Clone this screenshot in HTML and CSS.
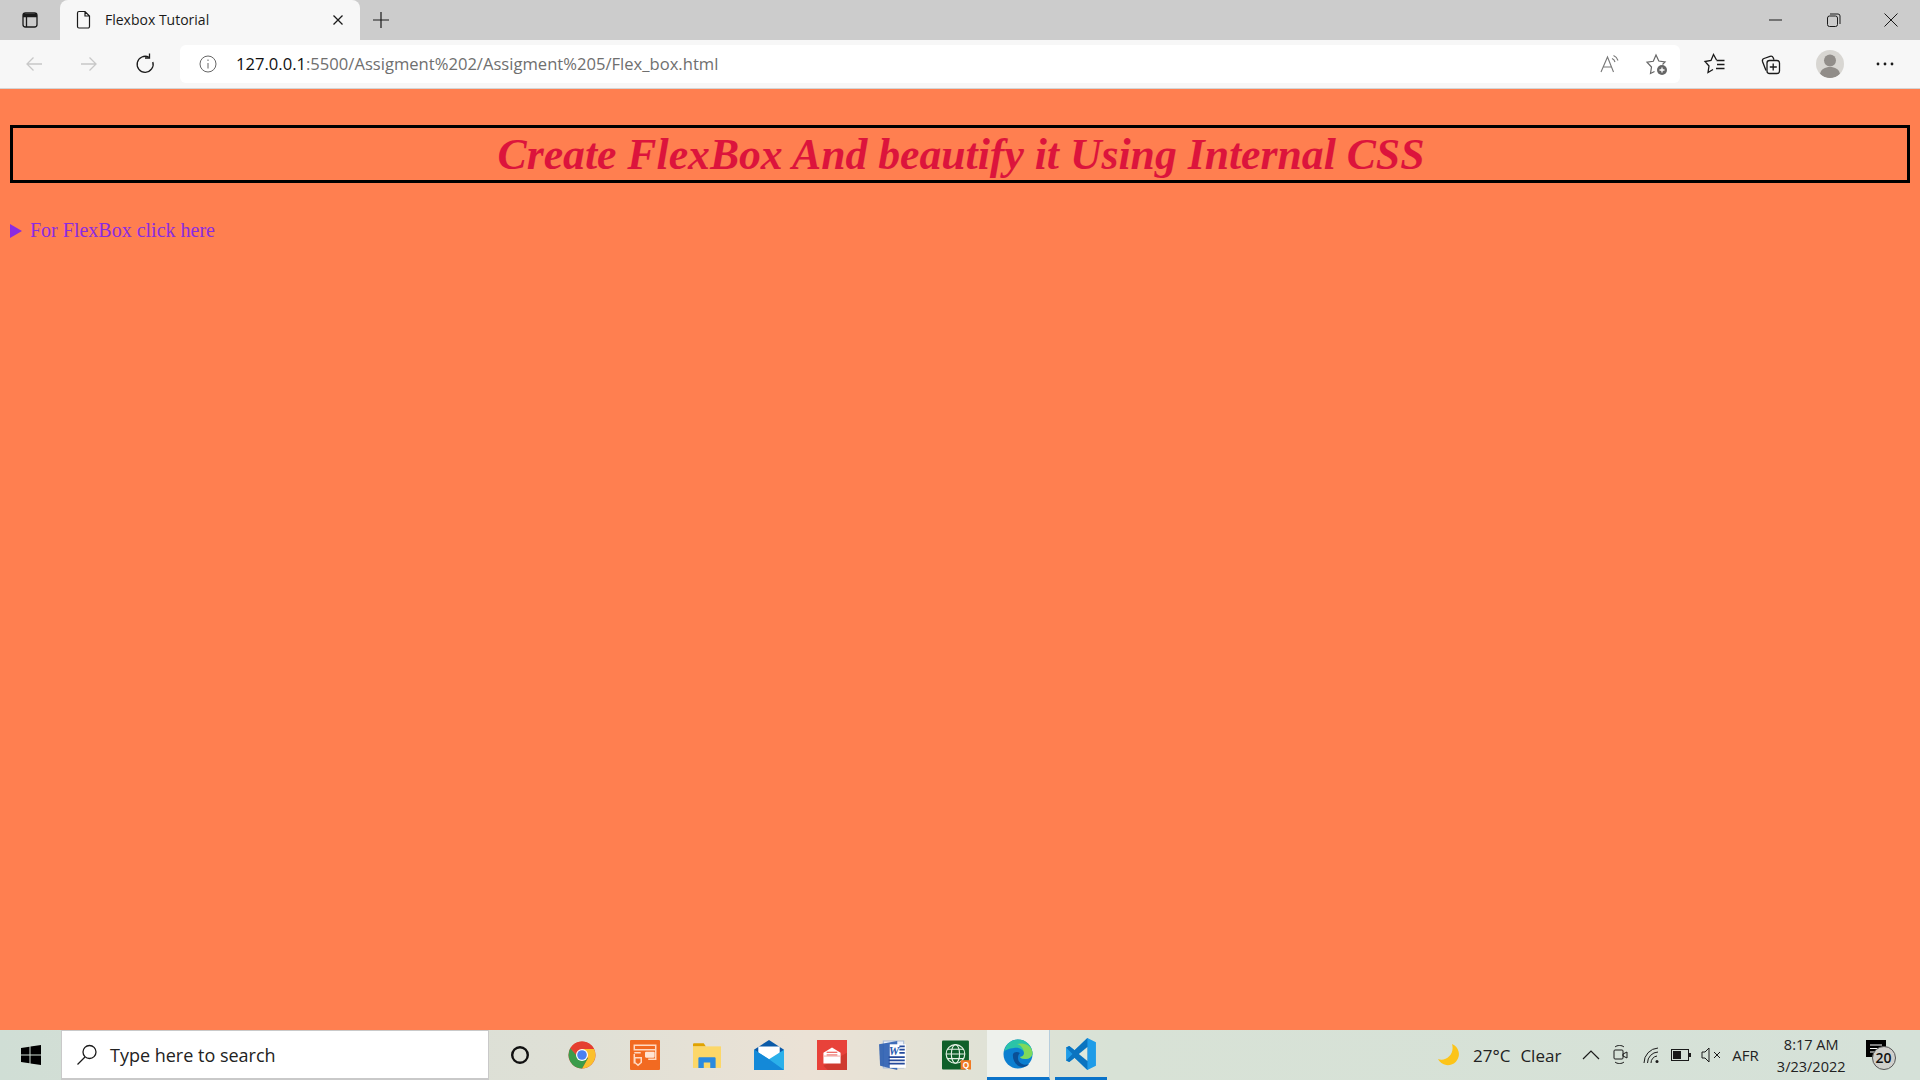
FILE: index.html
```html
<!DOCTYPE html>
<html lang="en">

<head>
    <meta charset="UTF-8">
    <title>Flexbox Tutorial</title>
    <link rel="stylesheet" href="styles.css">
</head>

<body>
    <div class="tabstrip">
        <button class="tab-actions">
            <svg width="20" height="20" viewBox="0 0 20 20" fill="none" stroke="#1a1a1a" stroke-width="1.3"><rect x="3" y="3" width="14" height="14" rx="2.5"/><path d="M3 5.500h14" stroke-width="3.500"/><path d="M6.500 7v10"/></svg>
        </button>
        <div class="tab">
            <svg width="20" height="20" viewBox="0 0 20 20" fill="none" stroke="#1a1a1a" stroke-width="1.2"><path d="M5 1.500h6l4.500 4.500v10.500a1.500 1.500 0 0 1-1.500 1.500H5a1.500 1.500 0 0 1-1.500-1.500V3A1.500 1.500 0 0 1 5 1.500zM11 1.500V6h4.500"/></svg>
            <span class="tab-title">Flexbox Tutorial</span>
            <svg class="tab-close" width="12" height="12" viewBox="0 0 12 12" stroke="#1a1a1a" stroke-width="1.300"><path d="M1.500 1.500l9 9M10.500 1.500l-9 9"/></svg>
        </div>
        <button class="new-tab">
            <svg width="18" height="18" viewBox="0 0 18 18" stroke="#1a1a1a" stroke-width="1.200"><path d="M9 1v16M1 9h16"/></svg>
        </button>
        <div class="window-controls">
            <svg width="14" height="14" viewBox="0 0 14 14" stroke="#1a1a1a" stroke-width="1"><path d="M0 7h13"/></svg>
            <svg width="14" height="14" viewBox="0 0 14 14" fill="none" stroke="#1a1a1a" stroke-width="1"><rect x="0.500" y="3" width="10" height="10.500" rx="2"/><path d="M3 1h8a2 2 0 0 1 2 2v8"/></svg>
            <svg width="14" height="14" viewBox="0 0 14 14" stroke="#1a1a1a" stroke-width="1"><path d="M0.500 0.500l13 13M13.500 0.500l-13 13"/></svg>
        </div>
    </div>

    <div class="toolbar">
        <div class="nav-buttons">
            <svg width="20" height="20" viewBox="0 0 20 20" fill="none" stroke="#c8c8c8" stroke-width="1.300"><path d="M18 10H3M9.500 3.500L3 10l6.500 6.500"/></svg>
            <svg width="20" height="20" viewBox="0 0 20 20" fill="none" stroke="#c8c8c8" stroke-width="1.300"><path d="M2 10h15M10.500 3.500L17 10l-6.500 6.500"/></svg>
            <svg width="22" height="22" viewBox="0 0 22 22" fill="none" stroke="#1a1a1a" stroke-width="1.300"><path d="M15 4.300A8 8 0 1 0 18.800 9"/><path d="M15.500 0.500v4.500H11"/></svg>
        </div>
        <div class="addressbar">
            <svg width="20" height="20" viewBox="0 0 20 20" fill="none" stroke="#666" stroke-width="1"><circle cx="10" cy="10" r="8"/><path d="M10 9v5.500M10 5.500v1.500"/></svg>
            <span class="url"><span class="host">127.0.0.1</span>:5500/Assigment%202/Assigment%205/Flex_box.html</span>
            <div class="address-icons">
                <svg width="22" height="22" viewBox="0 0 22 22" fill="none" stroke="#777" stroke-width="1.100"><path d="M2 19L8.500 4l6 15M4.500 14h8"/><path d="M13 5.500a5 5 0 0 1 3 3.500M14.500 2.500a8 8 0 0 1 4.500 5"/></svg>
                <svg width="24" height="24" viewBox="0 0 24 24" fill="none" stroke="#666" stroke-width="1.200"><path d="M9.500 19.500L5.500 21.500L6.500 15L2 10.200L8.300 9.300L11 3L13.800 9L20 10L17.500 12.500"/><circle cx="17" cy="18" r="5" fill="#666" stroke="none"/><path d="M17 15.500v5M14.500 18h5" stroke="#fff" stroke-width="1.300"/></svg>
            </div>
        </div>
        <div class="toolbar-icons">
            <svg width="24" height="24" viewBox="0 0 24 24" fill="none" stroke="#1a1a1a" stroke-width="1.300"><path d="M13.500 8L10.500 2.500L8 8.500L2 9.500L6 14L5 20.500L10 17.500"/><path d="M13.500 8.500h8M14 12.500h7.500M13 16.500h8.500"/></svg>
            <svg width="24" height="24" viewBox="0 0 24 24" fill="none" stroke="#1a1a1a" stroke-width="1.300"><path d="M7 18.500L3.500 9.500a2.500 2.500 0 0 1 1.500-3l6-2.200a2.500 2.500 0 0 1 3.200 1.400l.8 2"/><rect x="8" y="8.500" width="12.500" height="13" rx="2.500"/><path d="M14.200 11.500v7M10.800 15h7"/></svg>
            <div class="avatar">
                <svg width="28" height="28" viewBox="0 0 28 28" fill="#918d89"><circle cx="14" cy="10.500" r="6"/><path d="M4 24c1-5 5-7 10-7s9 2 10 7a14 14 0 0 1-20 0z"/></svg>
            </div>
            <svg width="18" height="6" viewBox="0 0 18 6" fill="#1a1a1a"><circle cx="2" cy="3" r="1.400"/><circle cx="9" cy="3" r="1.400"/><circle cx="16" cy="3" r="1.400"/></svg>
        </div>
    </div>

    <main class="page">
        <h1 class="page-title">Create FlexBox And beautify it Using Internal CSS</h1>
        <details class="flex-details">
            <summary>For FlexBox click here</summary>
        </details>
    </main>

    <footer class="taskbar">
        <div class="start">
            <svg width="20" height="20" viewBox="0 0 20 20" fill="#000"><path d="M0 3l8.500-1.200V9.500H0zM9.500 1.600L20 0v9.500H9.500zM0 10.500h8.500v7.700L0 17zM9.500 10.500H20V20L9.500 18.400z"/></svg>
        </div>
        <div class="search">
            <svg width="22" height="22" viewBox="0 0 22 22" fill="none" stroke="#1a1a1a" stroke-width="1.300"><circle cx="13.500" cy="8" r="6.500"/><path d="M9 13L1.500 20.500"/></svg>
            <span>Type here to search</span>
        </div>
        <div class="task-apps">
            <div class="task-app">
                <svg width="20" height="20" viewBox="0 0 20 20" fill="none" stroke="#111" stroke-width="2.400"><circle cx="10" cy="10" r="7.800"/></svg>
            </div>
            <div class="task-app">
                <svg width="28" height="28" viewBox="0 0 28 28"><circle cx="14" cy="14" r="13.500" fill="#dd4b39"/><path d="M14 14L2.300 7.300A13.500 13.500 0 0 1 14 .5h0A13.500 13.500 0 0 1 26 8H14z" fill="#e53e30"/><path d="M14 8h12a13.500 13.500 0 0 1-12 19.500L20 17z" fill="#fbc02d"/><path d="M2.300 7.300A13.500 13.500 0 0 0 14 27.500L20 17h-6a6 6 0 0 1-6-3z" fill="#3b9c4b"/><circle cx="14" cy="14" r="6" fill="#fff"/><circle cx="14" cy="14" r="4.800" fill="#4a80f0"/></svg>
            </div>
            <div class="task-app">
                <svg width="30" height="30" viewBox="0 0 28 28"><rect width="28" height="28" rx="1" fill="#f26a21"/><g fill="none" stroke="#ffd9c2" stroke-width="1.400"><path d="M4 5h20v4H4zM4 12h6M4 22v-9M24 9v9h-7"/><path d="M4.500 16.500h6v4.500l-3 2.500-3-2.500z"/></g><rect x="14" y="11" width="9" height="5.500" rx="1" fill="#ffe3d3"/></svg>
            </div>
            <div class="task-app">
                <svg width="28" height="26" viewBox="0 0 26 24"><path d="M0 2a1 1 0 0 1 1-1h9l2 3h-12z" fill="#e0a200"/><rect y="4" width="26" height="20" fill="#fcd768"/><path d="M5 24v-9a1 1 0 0 1 1-1h14a1 1 0 0 1 1 1v9h-5v-5h-6v5z" fill="#2a8ae0"/></svg>
            </div>
            <div class="task-app">
                <svg width="30" height="30" viewBox="0 0 28 28"><path d="M0 9L14 0l14 9v19H0z" fill="#0a5aa8"/><path d="M4 6h20v10l-10 5-10-5z" fill="#fff"/><path d="M0 9l14 9 14-9v19H0z" fill="#2bb0ea"/><path d="M0 28V9l14 9 14 10z" fill="#1489d8"/></svg>
            </div>
            <div class="task-app">
                <svg width="30" height="30" viewBox="0 0 28 28"><rect width="28" height="28" fill="#e8423a"/><path d="M28 12v16H10L6 24z" fill="#cf3a2f"/><path d="M6 12l8-5 8 5v10H6z" fill="#fff"/><path d="M9 11.500h10M9 14h10" stroke="#e8423a" stroke-width="1"/><path d="M6 15h16" stroke="#f4b0aa" stroke-width="1"/></svg>
            </div>
            <div class="task-app">
                <svg width="29" height="30" viewBox="0 0 27 28"><path d="M4 1h19v25H4z" fill="#eef2fa" stroke="#a9bcd8"/><path d="M0 4l17-3v27L1 24z" fill="#2a5db0" opacity="0.900"/><path d="M10 4h15v22H10z" fill="#fff"/><text class="word-mark" x="9" y="14">W</text><path d="M19 6h5M19 9h5M19 12h5M9 16h15M9 19h15M9 22h15" stroke="#24499a" stroke-width="1.600"/></svg>
            </div>
            <div class="task-app">
                <svg width="29" height="30" viewBox="0 0 28 28"><rect width="26" height="28" rx="1" fill="#0f5f2a"/><g fill="none" stroke="#e6f1e6" stroke-width="1.100"><circle cx="13" cy="13" r="9"/><ellipse cx="13" cy="13" rx="4" ry="9"/><path d="M4 13h18M5 8.500h16M5 17.500h16"/></g><rect x="18" y="19" width="10" height="9" fill="#f07a24"/><text class="q-mark" x="20" y="27">Q</text></svg>
            </div>
            <div class="task-app active edge">
                <svg width="30" height="30" viewBox="0 0 30 30"><circle cx="15" cy="15" r="14.500" fill="#0c7fd0"/><path d="M1 13C3 4 9 .5 15 .5c8 0 14 6 14.500 13.500 0 4-3 6-7 6-3 0-5-1-5.500-2 3-.5 4-2 4-4 0-3-5-6-10-5-5 .5-9 2-10 4z" fill="#2bc4a8"/><path d="M29.500 14c0 3-3 6-7 6-3 0-5-1-5.500-2 3-.5 4-2 4-4 0-4-3-8-7-9 8-2 15 2 15.500 9z" fill="#7fd95b"/><path d="M10 15c-1 6 3 13 10 13 2 0 5-1 6-3-4 2-11 0-11-6 0-3 1-4 2-5-3-2-6-1-7 1z" fill="#0a4f96"/></svg>
            </div>
            <div class="task-app active code">
                <svg width="30" height="32" viewBox="0 0 28 30"><path d="M20 0l8 4v22l-8 4L8 18.500 3 22.500 0 21V9l3-1.500 5 4z" fill="#1f9ce8"/><path d="M20 0v30L8 18.500 3 22.500 0 21l6-6-6-6 3-1.500 5 4z" fill="#0b74c0"/><path d="M20 8.500L12 15l8 6.500z" fill="#dfe8dc"/></svg>
            </div>
        </div>
        <div class="tray">
            <svg class="moon" width="24" height="24" viewBox="0 0 24 24"><path d="M15 1a11 11 0 1 1-14 15c8 3 17-5 14-15z" fill="#fcc419"/></svg>
            <span class="weather">27°C</span>
            <span class="weather">Clear</span>
            <svg class="chevron" width="18" height="10" viewBox="0 0 18 10" fill="none" stroke="#1a1a1a" stroke-width="1.200"><path d="M1 9l8-8 8 8"/></svg>
            <svg class="camera" width="16" height="22" viewBox="0 0 16 22" fill="none" stroke="#1a1a1a" stroke-width="1"><rect x="1" y="6" width="9" height="9" rx="1"/><path d="M10 10l4-2v6l-4-2zM2 3c2-2 7-2 9 0M2 18c2 2 7 2 9 0"/></svg>
            <svg class="wifi" width="18" height="18" viewBox="0 0 18 18" fill="none" stroke="#1a1a1a" stroke-width="1"><path d="M1 17A15 15 0 0 1 15 2M4.500 17A11 11 0 0 1 15 6M8 17a7 7 0 0 1 6-7"/><circle cx="14" cy="15.500" r="1.500" fill="#1a1a1a" stroke="none"/></svg>
            <svg width="20" height="12" viewBox="0 0 20 12"><rect x="0.500" y="0.500" width="17" height="11" fill="none" stroke="#1a1a1a"/><rect x="2" y="2" width="8" height="8" fill="#1a1a1a"/><rect x="18" y="4" width="2" height="4" fill="#1a1a1a"/></svg>
            <svg width="20" height="16" viewBox="0 0 20 16" fill="none" stroke="#1a1a1a" stroke-width="1"><path d="M1 5h3l4-4v14l-4-4H1zM13 5l6 6M19 5l-6 6"/></svg>
            <span class="lang">AFR</span>
            <div class="clock">
                <span>8:17 AM</span>
                <span>3/23/2022</span>
            </div>
            <div class="notifications">
                <svg width="20" height="18" viewBox="0 0 20 18"><path d="M0 0h20v17H0z" fill="#000"/><path d="M4 5h12M4 8.500h12M4 12h12" stroke="#fff"/></svg>
                <span class="badge">20</span>
            </div>
        </div>
    </footer>
</body>

</html>
```

FILE: styles.css
```css
* {
    box-sizing: border-box;
}

body {
    margin: 0;
    height: 100vh;
    display: flex;
    flex-direction: column;
    overflow: hidden;
    background-color: coral;
    font-family: "Open Sans", "Noto Sans", sans-serif;
}

button {
    background: none;
    border: none;
    padding: 0;
    display: flex;
    align-items: center;
    justify-content: center;
}

/* browser top */
.tabstrip {
    height: 40px;
    display: flex;
    align-items: flex-end;
    background-color: #cccccc;
}

.tab-actions {
    width: 60px;
    height: 40px;
}

.tab {
    width: 300px;
    height: 40px;
    padding: 0 16px 0 14px;
    display: flex;
    align-items: center;
    background-color: #f7f7f7;
    border-radius: 8px 8px 0 0;
}

.tab-title {
    flex: 1;
    margin: -2px 0 0 11px;
    font-size: 14px;
    color: #1a1a1a;
}

.new-tab {
    width: 42px;
    height: 40px;
}

.window-controls {
    margin-left: auto;
    height: 40px;
    width: 151px;
    padding-right: 22px;
    display: flex;
    align-items: center;
    justify-content: space-between;
}

.toolbar {
    height: 49px;
    display: flex;
    align-items: center;
    background-color: #f7f7f7;
    border-bottom: 1px solid #d4d4d4;
}

.nav-buttons {
    width: 180px;
    padding-left: 24px;
    display: flex;
    align-items: center;
    gap: 35px;
}

.addressbar {
    width: 1500px;
    height: 38px;
    padding: 0 11px 0 18px;
    display: flex;
    align-items: center;
    background-color: #fff;
    border-radius: 6px;
}

.url {
    margin: -2px 0 0 18px;
    font-size: 16.6px;
    color: #6f6f6f;
}

.host {
    color: #111;
}

.address-icons {
    margin-left: auto;
    width: 70px;
    display: flex;
    align-items: center;
    justify-content: space-between;
}

.toolbar-icons {
    flex: 1;
    padding: 0 26px 0 23px;
    display: flex;
    align-items: center;
    justify-content: space-between;
}

.avatar {
    width: 28px;
    height: 28px;
    background-color: #d8d6d2;
    border-radius: 50%;
    overflow: hidden;
}

/* the page itself */
.page {
    flex: 1;
    padding: 36px 10px 0;
}

.page-title {
    margin: 0;
    padding: 1px 0 0 2px;
    text-align: center;
    font-family: "Liberation Serif", "Times New Roman", serif;
    font-size: 43.7px;
    line-height: 51px;
    font-style: italic;
    font-weight: bold;
    color: crimson;
    border: 3px solid black;
}

.flex-details {
    margin-top: 36px;
    font-family: "Liberation Serif", "Times New Roman", serif;
    font-size: 20px;
    color: blueviolet;
}

.flex-details summary {
    display: flex;
    align-items: center;
    gap: 8px;
    list-style: none;
}

.flex-details summary::before {
    content: "";
    flex: none;
    border-left: 12px solid blueviolet;
    border-top: 7px solid transparent;
    border-bottom: 7px solid transparent;
}

/* windows taskbar */
.taskbar {
    height: 50px;
    display: flex;
    align-items: center;
    background: linear-gradient(90deg, #d0ded5 0%, #dfe0d6 30%, #ebe2d6 42%, #d8e2d6 58%, #d5e1d8 100%);
}

.start {
    width: 61px;
    display: flex;
    justify-content: center;
}

.search {
    width: 428px;
    height: 50px;
    padding-left: 14px;
    display: flex;
    align-items: center;
    gap: 12px;
    background-color: #fff;
    border: 1px solid #c9c9c9;
    border-bottom-width: 2px;
    font-size: 18px;
    color: #222;
}

.task-apps {
    display: flex;
    height: 50px;
}

.task-app {
    width: 62.3px;
    height: 50px;
    display: flex;
    align-items: center;
    justify-content: center;
}

.task-app.active {
    border-bottom: 3px solid #0b73c9;
}

.edge {
    background-color: #eef1ec;
    border-right: 1px solid #b6cddd;
}

.code {
    width: 52.3px;
    margin: 0 5px;
}

.word-mark {
    font-family: "Liberation Serif", serif;
    font-size: 11px;
    font-weight: bold;
    font-style: italic;
    fill: #2a5db0;
}

.q-mark {
    font-family: "Liberation Sans", sans-serif;
    font-size: 8px;
    font-weight: bold;
    fill: #fff;
}

.tray {
    flex: 1;
    display: flex;
    align-items: center;
    padding-left: 325px;
    gap: 10px;
    font-size: 17px;
    color: #222;
}

.moon {
    margin-right: 2px;
}

.weather {
    white-space: nowrap;
}

.chevron {
    margin-left: 11px;
}

.camera {
    margin-left: 3px;
}

.wifi {
    margin-left: 4px;
}

.lang {
    margin-left: 1px;
    font-size: 15px;
}

.clock {
    margin-left: 8px;
    display: flex;
    flex-direction: column;
    align-items: center;
    gap: 3px;
    font-size: 14.5px;
    white-space: nowrap;
}

.notifications {
    position: relative;
    margin-left: 10px;
    width: 30px;
    height: 30px;
}

.badge {
    position: absolute;
    right: 0;
    bottom: 0;
    width: 24px;
    height: 24px;
    border: 1px solid #555;
    border-radius: 50%;
    background-color: #d0d0cc;
    color: #111;
    font-size: 14px;
    font-weight: 600;
    line-height: 22px;
    text-align: center;
}
```
